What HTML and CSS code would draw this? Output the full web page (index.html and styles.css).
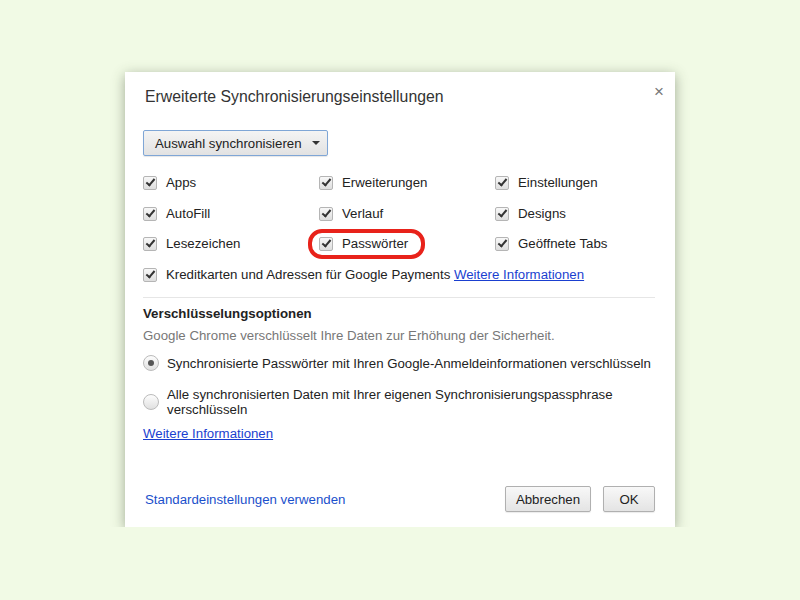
FILE: index.html
```html
<!DOCTYPE html>
<html>
<head>
    <title>Erweiterte Synchronisierungseinstellungen</title>
    <link rel="stylesheet" href="styles.css">
</head>
<body>
    <div class="dialog">
        <div class="dialogHead">
            <h1>Erweiterte Synchronisierungseinstellungen</h1>
            <span class="closeBtn">×</span>
        </div>

        <div class="selectRow">
            <button class="selectBtn">Auswahl synchronisieren <span class="arrow"></span></button>
        </div>

        <div class="checkGrid">
            <label class="item"><span class="box"></span>Apps</label>
            <label class="item"><span class="box"></span>Erweiterungen</label>
            <label class="item"><span class="box"></span>Einstellungen</label>
            <label class="item"><span class="box"></span>AutoFill</label>
            <label class="item"><span class="box"></span>Verlauf</label>
            <label class="item"><span class="box"></span>Designs</label>
            <label class="item"><span class="box"></span>Lesezeichen</label>
            <label class="item marked"><span class="box"></span>Passwörter</label>
            <label class="item"><span class="box"></span>Geöffnete Tabs</label>
            <label class="item wide"><span class="box"></span>Kreditkarten und Adressen für Google Payments&nbsp;<a href="#">Weitere Informationen</a></label>
        </div>

        <hr class="sep">

        <div class="encrypt">
            <h2>Verschlüsselungsoptionen</h2>
            <p class="hint">Google Chrome verschlüsselt Ihre Daten zur Erhöhung der Sicherheit.</p>
            <label class="radio"><span class="dot on"></span><span>Synchronisierte Passwörter mit Ihren Google-Anmeldeinformationen verschlüsseln</span></label>
            <label class="radio two"><span class="dot"></span><span>Alle synchronisierten Daten mit Ihrer eigenen Synchronisierungspassphrase verschlüsseln</span></label>
            <a href="#" class="more">Weitere Informationen</a>
        </div>

        <div class="footer">
            <a href="#" class="reset">Standardeinstellungen verwenden</a>
            <div class="btns">
                <button class="btn">Abbrechen</button>
                <button class="btn ok">OK</button>
            </div>
        </div>
    </div>
</body>
</html>
```

FILE: styles.css
```css
body {
    margin: 0;
    padding: 0;
    background: #f1fae5;
    font-family: 'Liberation Sans', Arial, sans-serif;
    font-size: 13.25px;
    color: #222;
}

.dialog {
    box-sizing: border-box;
    width: 550px;
    height: 455px;
    margin: 72px auto 0;
    background: #fff;
    padding: 0 20px 0 18px;
    display: flex;
    flex-direction: column;
    box-shadow: 0 3px 12px rgba(60, 70, 50, 0.45);
}

.dialogHead {
    display: flex;
    justify-content: space-between;
    align-items: flex-start;
    padding-top: 15px;
}
.dialogHead h1 {
    margin: 0 0 0 2px;
    font-size: 15.8px;
    font-weight: normal;
    color: #333;
    line-height: 20px;
}
.closeBtn {
    margin: -5px -9px 0 0;
    font-size: 17px;
    color: #777;
    line-height: 20px;
}

.selectRow {
    margin-top: 23px;
}
.selectBtn {
    font-family: inherit;
    font-size: 13.25px;
    color: #222;
    height: 26px;
    width: 185px;
    padding: 0 0 0 11px;
    text-align: left;
    border: 1px solid #7fa6d6;
    border-radius: 2px;
    background: linear-gradient(#f4f4f4, #e2e2e2);
    display: flex;
    align-items: center;
    box-shadow: 0 1px 1px rgba(0, 0, 0, 0.1);
}
.arrow {
    margin-left: 10px;
    width: 0;
    height: 0;
    border-left: 4px solid transparent;
    border-right: 4px solid transparent;
    border-top: 4px solid #333;
}

.checkGrid {
    margin-top: 18px;
    display: grid;
    grid-template-columns: 176px 176px 1fr;
    grid-auto-rows: 18px;
    row-gap: 12.7px;
}
.item {
    display: flex;
    align-items: center;
    height: 18px;
    line-height: 18px;
}
.item.wide {
    grid-column: 1 / 4;
}
.box {
    box-sizing: border-box;
    width: 14px;
    height: 14px;
    margin-right: 9px;
    border: 1px solid #b5b5b5;
    border-radius: 2px;
    background: linear-gradient(#f8f8f8, #dedede);
    position: relative;
}
.box::after {
    content: '';
    position: absolute;
    left: 4px;
    top: 0px;
    width: 3px;
    height: 7px;
    border-right: 2px solid #333;
    border-bottom: 2px solid #333;
    transform: rotate(40deg);
}
.item.marked {
    margin: -6px 0 -6px -11px;
    padding: 0 0 0 7px;
    height: 22px;
    width: 102px;
    border: 4px solid #e8221a;
    border-radius: 14px;
}

a {
    color: #1a3fd0;
}

.sep {
    margin: 13px 0 0;
    border: none;
    border-top: 1px solid #e6e6e6;
}

.encrypt h2 {
    margin: 8px 0 0;
    font-size: 13.25px;
    font-weight: bold;
    line-height: 16px;
    color: #222;
}
.hint {
    margin: 6px 0 0;
    color: #777;
    line-height: 16px;
}
.radio {
    display: flex;
    align-items: center;
    margin-top: 11px;
    line-height: 15px;
}
.radio.two {
    margin-top: 16px;
    padding-right: 40px;
}
.dot {
    box-sizing: border-box;
    flex: none;
    width: 16px;
    height: 16px;
    margin-right: 8px;
    border: 1px solid #bbb;
    border-radius: 50%;
    background: linear-gradient(#fdfdfd, #e0e0e0);
    display: flex;
    align-items: center;
    justify-content: center;
}
.dot.on::after {
    content: '';
    width: 6px;
    height: 6px;
    border-radius: 50%;
    background: #555;
}
.more {
    display: inline-block;
    margin-top: 9px;
    line-height: 16px;
}

.footer {
    margin-top: auto;
    margin-bottom: 15px;
    display: flex;
    justify-content: space-between;
    align-items: center;
}
.reset {
    margin-left: 2px;
    text-decoration: none;
    color: #1a4fcb;
}
.btns {
    display: flex;
    gap: 12px;
}
.btn {
    font-family: inherit;
    font-size: 13.25px;
    color: #222;
    height: 26px;
    padding: 0 10px;
    border: 1px solid #b0b0b0;
    border-radius: 2px;
    background: linear-gradient(#f8f8f8, #e4e4e4);
    box-shadow: 0 1px 1px rgba(0, 0, 0, 0.08);
}
.btn.ok {
    width: 52px;
}
```
